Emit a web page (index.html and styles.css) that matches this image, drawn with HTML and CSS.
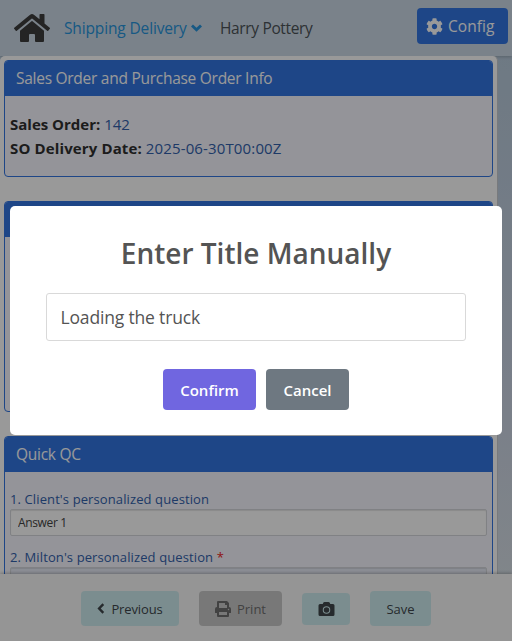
FILE: index.html
```html
<!DOCTYPE html>
<html lang="en">
<head>
<meta charset="utf-8">
<title>Shipping Delivery</title>
<link rel="stylesheet" href="styles.css">
</head>
<body>
<div class="app">
  <header class="topbar">
    <svg class="home" viewBox="0 0 576 512"><path d="M280.400 148.300L96 300.100V464a16 16 0 0 0 16 16l112.100-.3a16 16 0 0 0 15.900-16V368a16 16 0 0 1 16-16h64a16 16 0 0 1 16 16v95.600a16 16 0 0 0 16 16.100L464 480a16 16 0 0 0 16-16V300L295.700 148.300a12.200 12.200 0 0 0-15.300 0zM571.600 251.500L488 182.600V44a12 12 0 0 0-12-12h-56a12 12 0 0 0-12 12v72.600L318.500 43a48 48 0 0 0-61 0L4.300 251.500a12 12 0 0 0-1.600 16.900l25.500 31a12 12 0 0 0 16.900 1.600l235.200-193.700a12.200 12.200 0 0 1 15.300 0L530.900 301a12 12 0 0 0 16.900-1.600l25.500-31a12 12 0 0 0-1.700-16.900z"/></svg>
    <a class="nav"><span class="nav-text">Shipping Delivery</span><svg class="chev" viewBox="0 0 10 7"><path d="M.9 1.200L5 5.200 9.100 1.200"/></svg></a>
    <span class="user">Harry Pottery</span>
    <button class="config"><svg viewBox="0 0 512 512"><path d="M487.400 315.700l-42.600-24.600c4.300-23.200 4.300-47 0-70.200l42.600-24.600c4.900-2.800 7.100-8.600 5.500-14-11.100-35.600-30-67.800-54.700-94.600-3.800-4.100-10-5.100-14.800-2.300L380.800 110c-17.900-15.400-38.500-27.300-60.800-35.100V25.800c0-5.600-3.900-10.500-9.400-11.700-36.700-8.200-74.300-7.800-109.200 0-5.500 1.200-9.400 6.100-9.400 11.700V75c-22.200 7.900-42.800 19.800-60.800 35.100L88.700 85.500c-4.900-2.800-11-1.900-14.800 2.300-24.700 26.700-43.600 58.900-54.700 94.600-1.700 5.400.6 11.200 5.500 14L67.300 221c-4.300 23.200-4.300 47 0 70.200l-42.600 24.600c-4.900 2.800-7.100 8.600-5.500 14 11.100 35.600 30 67.800 54.700 94.600 3.800 4.100 10 5.100 14.800 2.300l42.600-24.600c17.900 15.400 38.500 27.300 60.800 35.100v49.200c0 5.600 3.900 10.500 9.400 11.700 36.700 8.200 74.300 7.800 109.200 0 5.500-1.200 9.400-6.100 9.400-11.700v-49.200c22.200-7.900 42.800-19.800 60.800-35.100l42.600 24.600c4.900 2.800 11 1.900 14.800-2.300 24.700-26.700 43.600-58.900 54.700-94.600 1.500-5.500-.7-11.300-5.600-14.100zM256 336c-44.100 0-80-35.900-80-80s35.900-80 80-80 80 35.900 80 80-35.900 80-80 80z"/></svg><span>Config</span></button>
  </header>
  <main class="page">
    <section class="card info">
      <h2>Sales Order and Purchase Order Info</h2>
      <div class="details">
        <p><b class="so">Sales Order:</b> <span class="num">142</span></p>
        <p><b class="date">SO Delivery Date:</b> <span class="stamp">2025-06-30T00:00Z</span></p>
      </div>
    </section>
    <section class="card items"><h2></h2></section>
    <section class="card qc">
      <h2>Quick QC</h2>
      <div class="form">
        <label>1. Client's personalized question</label>
        <input value="Answer 1">
        <label class="second">2. Milton's personalized question <i>*</i></label>
        <input class="tinted">
      </div>
    </section>
  </main>
  <footer class="actions">
    <button class="prev"><svg viewBox="0 0 7 10"><path d="M5.600 1.100L1.800 5l3.800 3.900"/></svg><span>Previous</span></button>
    <button class="print"><svg viewBox="0 0 512 512"><path fill-rule="evenodd" d="M448 192V77.300a32 32 0 0 0-9.400-22.600L393.400 9.400A32 32 0 0 0 370.700 0H96a32 32 0 0 0-32 32v160a64 64 0 0 0-64 64v112a16 16 0 0 0 16 16h48v96a32 32 0 0 0 32 32h320a32 32 0 0 0 32-32v-96h48a16 16 0 0 0 16-16V256a64 64 0 0 0-64-64zm-64 256H128v-96h256zm0-224H128V64h192v48a16 16 0 0 0 16 16h48zm48 72a24 24 0 1 1 0-48 24 24 0 0 1 0 48z"/></svg><span>Print</span></button>
    <button class="photo"><svg viewBox="0 0 512 448"><path fill-rule="evenodd" d="M512 112v288a48 48 0 0 1-48 48H48a48 48 0 0 1-48-48V112a48 48 0 0 1 48-48h88l12.300-32.900A48 48 0 0 1 193.200 0h125.500a48 48 0 0 1 44.900 31.100L376 64h88a48 48 0 0 1 48 48zM256 136a120 120 0 1 0 0 240 120 120 0 0 0 0-240zm0 32a88 88 0 1 1 0 176 88 88 0 0 1 0-176z"/></svg></button>
    <button class="save"><span>Save</span></button>
  </footer>
</div>
<div class="overlay">
  <div class="modal">
    <h1>Enter Title Manually</h1>
    <input value="Loading the truck">
    <div class="choices"><button class="confirm">Confirm</button><button class="cancel">Cancel</button></div>
  </div>
</div>
</body>
</html>
```

FILE: styles.css
```css
* { box-sizing: border-box; }
body { margin: 0; font-family: "Open Sans", "Noto Sans", sans-serif; font-size: 15px; color: #212529; overflow: hidden; }
button, input { font: inherit; margin: 0; border: 0; }
h1, h2, p { margin: 0; font-weight: 400; }
svg { flex: none; fill: currentColor; }
.app { height: 641px; display: flex; flex-direction: column; overflow: hidden; background: linear-gradient(#b5c9da, #ccd5e5 65%, #dbe3e6); }
.topbar { height: 56px; flex: none; display: flex; align-items: center; background: #cbd9e6; padding-left: 14px; box-shadow: 0 1px 3px rgba(0,0,0,.2); white-space: nowrap; }
.home { width: 36px; height: 32px; color: #3c3c3c; }
.nav { display: flex; align-items: center; margin-left: 14px; color: #2794dc; width: 156px; }
.nav-text { font-size: 15.500px; letter-spacing: -.14px; width: 124px; }
.chev { width: 11px; height: 8px; margin-left: 3px; fill: none; stroke: currentColor; stroke-width: 2.600; }
.user { color: #4c5257; font-size: 15.500px; letter-spacing: -.35px; width: 197px; }
.config { width: 91px; height: 36px; margin-top: -4px; padding: 0 0 0 9px; border-radius: 4px; background: #3376e2; color: #fff; display: flex; align-items: center; font-size: 15.500px; letter-spacing: .05px; }
.config svg { width: 17px; height: 17px; margin-right: 5px; }
.page { flex: 1; min-height: 0; overflow: hidden; width: 498px; background: #fff; border-right: 1px solid #c8ccd0; border-radius: 5px 5px 0 0; padding: 4px 4px 0; }
.card { width: 489px; border: 1px solid #3376e2; border-radius: 4px; background: #f7f7ff; margin-bottom: 24px; overflow: hidden; }
.card h2 { height: 35px; line-height: 35px; padding-left: 11px; background: #3376e2; color: #fff; font-size: 15.500px; letter-spacing: -.27px; }
.info { height: 117px; }
.details { padding: 16px 5px; line-height: 24px; color: #3261ac; }
.details b { color: #303030; font-weight: 700; }
.details .date { letter-spacing: .13px; }
.details .stamp { letter-spacing: .14px; }
.items { height: 211px; }
.qc { height: 230px; }
.form { padding: 17px 5px; color: #3261ac; font-size: 13px; }
.form label { display: block; height: 20px; line-height: 20px; white-space: nowrap; letter-spacing: .11px; }
.form label.second { margin-top: 11px; }
.form i { color: #e22; font-style: normal; }
.form input { display: block; width: 477px; height: 27px; padding: 0 7px; background: #fff; border: 1px solid #d5d8dc; border-radius: 2px; box-shadow: inset 0 1px 1px rgba(0,0,0,.1); font-size: 12px; letter-spacing: -.35px; color: #444; }
.form input.tinted { background: #e9edf8; }
.actions { height: 67px; flex: none; position: relative; display: flex; align-items: center; gap: 20px; padding: 2px 0 0 81px; background: #f8f8f8; box-shadow: 0 -1px 3px rgba(0,0,0,.25); font-size: 13px; color: #40474b; }
.actions button { height: 35px; padding: 0; background: #cdecef; border-radius: 4px; color: inherit; display: flex; align-items: center; justify-content: center; }
.actions .prev { width: 98px; }
.prev svg { width: 8px; height: 11px; margin-right: 6px; fill: none; stroke: currentColor; stroke-width: 2.200; }
.prev span { letter-spacing: -.12px; }
.actions .print { width: 83px; background: #c9c9c9; color: #6e6e6e; }
.print svg { width: 16px; height: 16px; margin-right: 6px; }
.actions .photo { width: 48px; height: 32px; }
.photo svg { width: 17px; height: 14px; }
.actions .save { width: 61px; }
.overlay { position: fixed; inset: 0; background: rgba(0,0,0,.4); display: flex; align-items: center; justify-content: center; }
.modal { width: 492px; height: 229px; background: #fff; border-radius: 5px; padding: 25px 36px 0; }
.modal h1 { height: 44px; line-height: 44px; text-align: center; color: #545454; font-size: 28px; font-weight: 600; white-space: nowrap; }
.modal input { display: block; width: 420px; height: 48px; margin-top: 18px; padding: 0 13.500px; border: 1px solid #d9d9d9; border-radius: 3px; color: #545454; background: #fff; font-size: 17.500px; letter-spacing: -.17px; }
.choices { display: flex; justify-content: center; gap: 10px; margin-top: 28px; }
.choices button { height: 41px; padding: 0; border-radius: 4px; color: #fff; font-weight: 600; font-size: 15px; }
.choices .confirm { width: 93px; background: #7066e0; }
.choices .cancel { width: 83px; background: #6e7881; }
```
